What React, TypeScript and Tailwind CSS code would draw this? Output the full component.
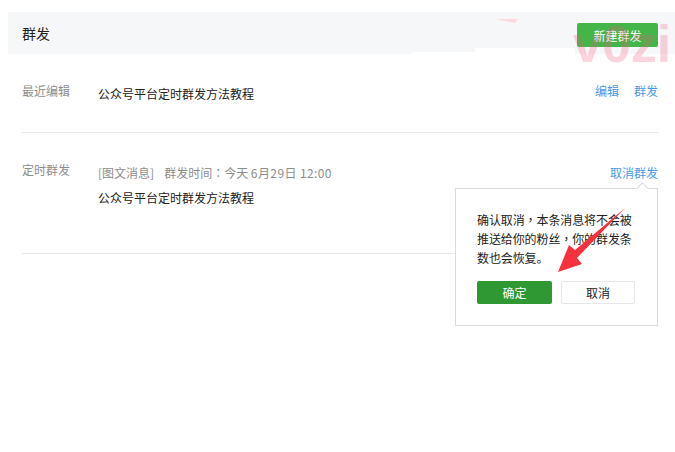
const P = ({ c }: { c: string }) => (
  <span style={{ fontFamily: '"Noto Sans CJK TC", sans-serif' }}>{c}</span>
);

export default function App() {
  return (
    <div className="relative w-[675px] h-[452px] overflow-hidden bg-white text-[12px] leading-[20px] text-[#222]" style={{ fontFamily: '"Noto Sans CJK SC", "Liberation Sans", sans-serif' }}>
      <div className="h-[12px]" />
      <div className="ml-[8px] h-[42px] bg-[#f6f7f9] flex items-start justify-between pl-[14px] pr-[17px]">
        <span className="text-[14px] leading-[20px] mt-[11px] text-[#222]">群发</span>
        <button className="w-[81px] h-[24px] mt-[11px] rounded-[2px] bg-[#44b549] text-white text-[12px] leading-[23px]">新建群发</button>
      </div>
      <div className="mr-[17px] ml-[22px]">
        <div className="h-[79px] border-b border-[#e7e7eb] flex items-start pt-[27px]">
          <div className="w-[76px] text-[#8d8d8d]">最近编辑</div>
          <div className="flex-1 pt-[3px]">公众号平台定时群发方法教程</div>
          <div className="flex gap-[15px] text-[#459ae9]">
            <span>编辑</span>
            <span>群发</span>
          </div>
        </div>
        <div className="h-[121px] border-b border-[#e7e7eb] flex items-start pt-[27px]">
          <div className="w-[76px] text-[#8d8d8d]">定时群发</div>
          <div className="flex-1 pt-[3px]">
            <div className="text-[#8d8d8d] flex gap-[10px]">
              <span>[图文消息]</span>
              <span>群发时间<P c="：" />今天 <span className="tracking-[0.4px]">6月29日 12:00</span></span>
            </div>
            <div className="mt-[5px]">公众号平台定时群发方法教程</div>
          </div>
          <div className="text-[#459ae9] pt-[3px]">取消群发</div>
        </div>
      </div>

      <div className="absolute left-[455px] top-[188px] w-[203px] h-[138px] border border-[#d9dadc] bg-white pl-[21px] pr-[20px] pt-[21px]">
        <div className="absolute left-[182px] top-[-5px] w-[9px] h-[9px] rotate-45 bg-white border-l border-t border-[#d9dadc]" />
        <p className="leading-[19px] text-[#222] tracking-[-0.1px]">确认取消<P c="，" />本条消息将不会被推送给你的粉丝<P c="，" />你的群发条数也会恢复。</p>
        <div className="flex justify-between mt-[14px] w-[158px]">
          <button className="w-[75px] h-[23px] rounded-[2px] bg-[#2f9833] text-white leading-[23px]">确定</button>
          <button className="w-[74px] h-[23px] rounded-[2px] border border-[#e7e7eb] bg-white text-[#222] leading-[21px]">取消</button>
        </div>
      </div>

      <div className="absolute left-[412px] top-[52px] w-[63px] h-[3px] bg-white" />
      <div className="absolute left-[475px] top-[48px] w-[100px] h-[7px] bg-white" />
      <svg className="absolute left-0 top-0 pointer-events-none" width="675" height="452" viewBox="0 0 675 452">
        <path d="M495 19 L518 19 L515 23 Z" fill="#fbd9df" />
        <path d="M625 208 L575 250 L569 245 L558 272 L582 264 L577 258 Z" fill="#f6323f" />
      </svg>

      <div className="absolute left-[573px] top-[14px] text-[52px] leading-[60px] font-bold text-[#f4597a] opacity-25 pointer-events-none" style={{ fontFamily: '"Liberation Sans", sans-serif' }}>v0zi</div>
    </div>
  );
}
